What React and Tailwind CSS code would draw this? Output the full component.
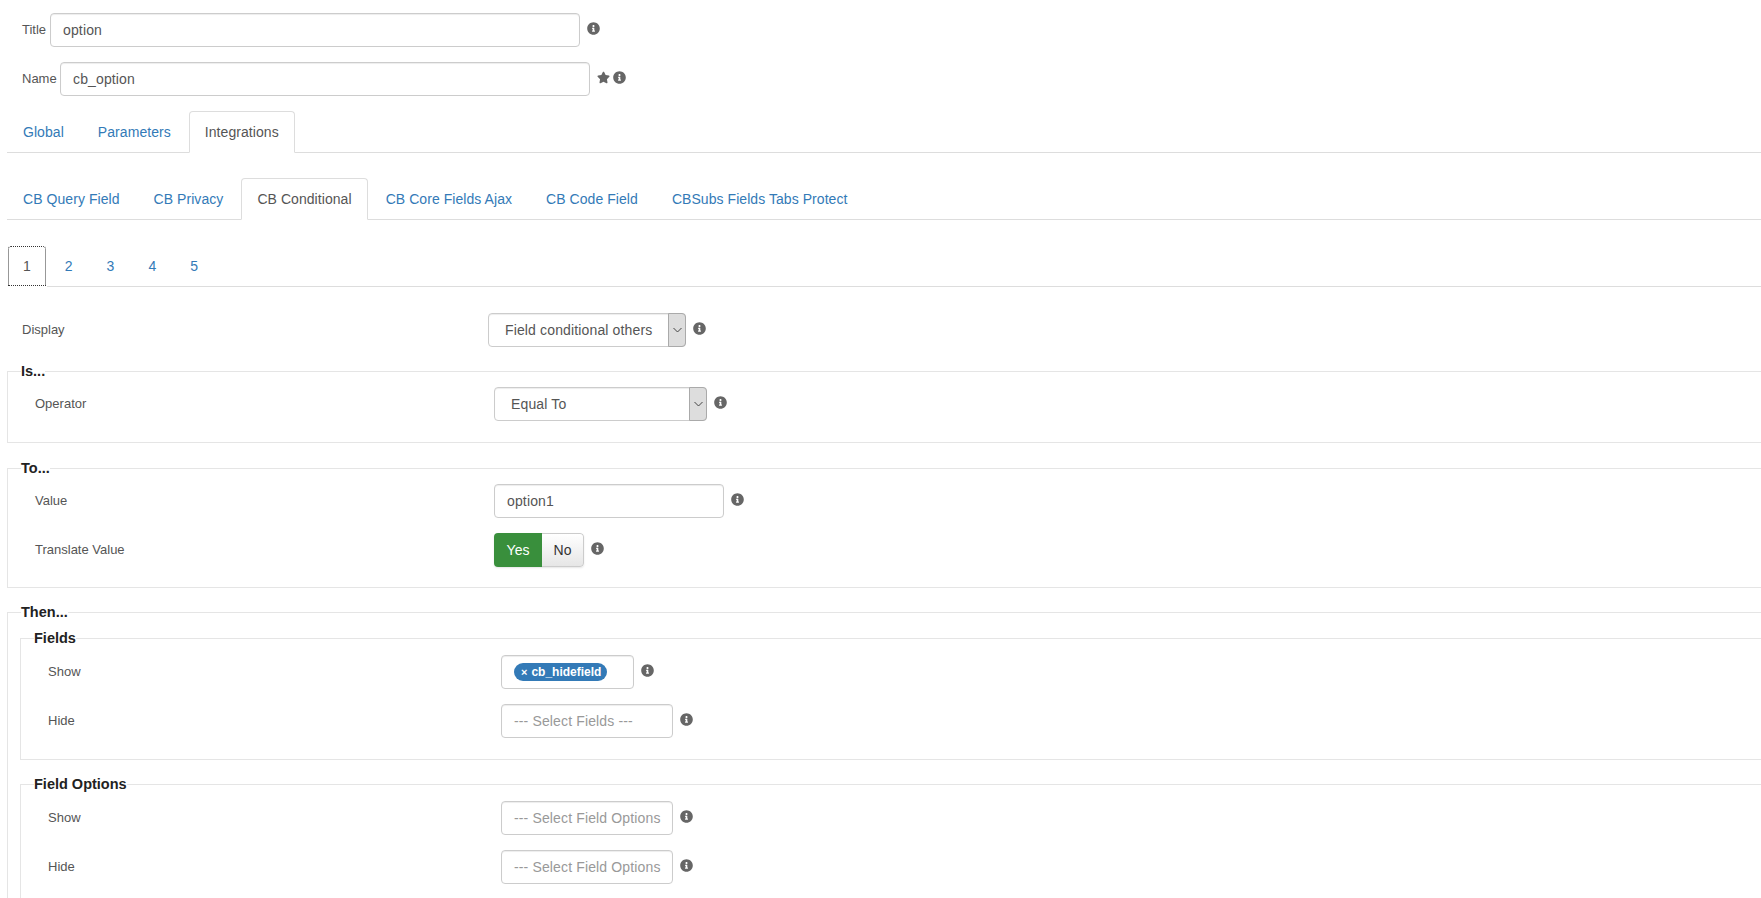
import { FaInfoCircle, FaStar } from 'react-icons/fa';

const globalTabs = ['Global', 'Parameters', 'Integrations'];
const pluginTabs = ['CB Query Field', 'CB Privacy', 'CB Conditional', 'CB Core Fields Ajax', 'CB Code Field', 'CBSubs Fields Tabs Protect'];
const stepTabs = ['1', '2', '3', '4', '5'];

const inputBox = 'h-[34px] border border-[#ccc] rounded-[4px] bg-white text-[14px] tracking-[0.14px] text-[#555] shadow-[inset_0_1px_1px_rgba(0,0,0,0.075)] outline-none';

function Info() {
  return <FaInfoCircle className="ml-[7px] -mt-[3px] shrink-0 text-[#666]" size={13} />;
}

function Tabs({ items, active }) {
  return (
    <div className="ml-[7px] flex h-[42px] border-b border-[#ddd]">
      {items.map((item) => (
        <div
          key={item}
          className={
            item === active
              ? 'mr-[2px] h-[42px] rounded-t-[4px] border border-[#ddd] border-b-white bg-white px-[15px] pt-[10px] text-[14px] leading-[20px] tracking-[0.06px] text-[#555]'
              : 'mr-[2px] h-[41px] border border-transparent px-[15px] pt-[10px] text-[14px] leading-[20px] tracking-[0.06px] text-[#337ab7]'
          }
        >
          {item}
        </div>
      ))}
    </div>
  );
}

function StepTabs() {
  return (
    <div className="ml-[7px] flex h-[42px] border-b border-[#ddd]">
      {stepTabs.map((item, i) => (
        <div
          key={item}
          className={
            i === 0
              ? 'mr-[2px] h-[42px] rounded-t-[4px] border border-transparent border-b-white bg-white px-[15px] pt-[10px] text-[14px] leading-[20px] text-[#555] outline-1 outline-dotted -outline-offset-2 outline-[#333]'
              : 'mr-[2px] h-[41px] border border-transparent px-[15px] pt-[10px] text-[14px] leading-[20px] text-[#337ab7]'
          }
        >
          {item}
        </div>
      ))}
    </div>
  );
}

function Row({ label, labelClass, className, children }) {
  return (
    <div className={`flex items-center ${className || ''}`}>
      <div className={`shrink-0 text-[13px] text-[#555] ${labelClass}`}>{label}</div>
      {children}
    </div>
  );
}

function FakeSelect({ value, className }) {
  return (
    <div className={`flex items-stretch ${inputBox} ${className}`}>
      <div className="flex-1 pl-[16px] leading-[32px]">{value}</div>
      <div className="-my-px -mr-px flex w-[18px] items-center justify-center rounded-r-[4px] border border-[#aaa] bg-[#ddd]">
        <svg width="9" height="6" viewBox="0 0 9 6" fill="none" stroke="#444" strokeWidth="1">
          <path d="M0.5 1 L4.5 5 L8.5 1" />
        </svg>
      </div>
    </div>
  );
}

function Section({ title, className, children }) {
  return (
    <fieldset className={`border-y border-l border-r-0 border-[#e5e5e5] pl-[12px] ${className}`}>
      <legend className="ml-[1px] p-0 text-[14.5px] leading-[20px] font-bold text-[#222]">{title}</legend>
      {children}
    </fieldset>
  );
}

function Placeholder({ text }) {
  return <div className={`w-[172px] overflow-hidden whitespace-nowrap pl-[12px] leading-[32px] ${inputBox} text-[#999]`}>{text}</div>;
}

export default function App() {
  return (
    <div className="h-screen overflow-hidden bg-white pt-[13px] font-['Liberation_Sans',Arial,sans-serif]">
      <div className="flex items-center pl-[22px]">
        <div className="w-[28px] shrink-0 text-[13px] text-[#555]">Title</div>
        <input readOnly value="option" className={`w-[530px] px-[12px] ${inputBox}`} />
        <Info />
      </div>
      <div className="mt-[15px] flex items-center pl-[22px]">
        <div className="w-[38px] shrink-0 text-[13px] text-[#555]">Name</div>
        <input readOnly value="cb_option" className={`w-[530px] px-[12px] ${inputBox}`} />
        <FaStar className="ml-[7px] -mt-[4px] shrink-0 text-[#666]" size={13} />
        <FaInfoCircle className="ml-[3px] -mt-[4px] shrink-0 text-[#666]" size={13} />
      </div>

      <div className="mt-[15px]">
        <Tabs items={globalTabs} active="Integrations" />
      </div>
      <div className="mt-[25px]">
        <Tabs items={pluginTabs} active="CB Conditional" />
      </div>
      <div className="mt-[25px]">
        <StepTabs />
      </div>

      <Row label="Display" labelClass="w-[466px]" className="mt-[26px] pl-[22px]">
        <FakeSelect value="Field conditional others" className="w-[198px]" />
        <Info />
      </Row>

      <Section title="Is..." className="mt-[14px] ml-[7px] pb-[21px]">
        <Row label="Operator" labelClass="w-[459px]" className="mt-[6px] pl-[15px]">
          <FakeSelect value="Equal To" className="w-[213px]" />
          <Info />
        </Row>
      </Section>

      <Section title="To..." className="mt-[15px] ml-[7px] pb-[20px]">
        <Row label="Value" labelClass="w-[459px]" className="mt-[6px] pl-[15px]">
          <input readOnly value="option1" className={`w-[230px] px-[12px] ${inputBox}`} />
          <Info />
        </Row>
        <Row label="Translate Value" labelClass="w-[459px]" className="mt-[15px] pl-[15px]">
          <div className="flex h-[34px] w-[90px] overflow-hidden rounded-[4px] text-[14px] shadow-[0_1px_2px_rgba(0,0,0,0.1)]">
            <div className="flex w-[48px] items-center justify-center bg-[#398f3c] text-white">Yes</div>
            <div className="flex flex-1 items-center justify-center rounded-r-[4px] border border-l-0 border-[#ccc] bg-linear-to-b from-white to-[#e6e6e6] text-[#333]">No</div>
          </div>
          <Info />
        </Row>
      </Section>

      <Section title="Then..." className="mt-[14px] ml-[7px]">
        <Section title="Fields" className="mt-[6px] pb-[21px]">
          <Row label="Show" labelClass="w-[453px]" className="mt-[7px] pl-[15px]">
            <div className={`flex w-[133px] items-center pl-[12px] ${inputBox}`}>
              <div className="flex h-[18px] w-[93px] items-center rounded-full bg-[#337ab7] pl-[7px] text-[12px] font-bold tracking-normal text-white">
                <span className="mr-[4px] text-[11px]">×</span>cb_hidefield
              </div>
            </div>
            <Info />
          </Row>
          <Row label="Hide" labelClass="w-[453px]" className="mt-[15px] pl-[15px]">
            <Placeholder text="--- Select Fields ---" />
            <Info />
          </Row>
        </Section>
        <Section title="Field Options" className="mt-[14px] pb-[20px]">
          <Row label="Show" labelClass="w-[453px]" className="mt-[7px] pl-[15px]">
            <Placeholder text="--- Select Field Options" />
            <Info />
          </Row>
          <Row label="Hide" labelClass="w-[453px]" className="mt-[15px] pl-[15px]">
            <Placeholder text="--- Select Field Options" />
            <Info />
          </Row>
        </Section>
      </Section>
    </div>
  );
}
